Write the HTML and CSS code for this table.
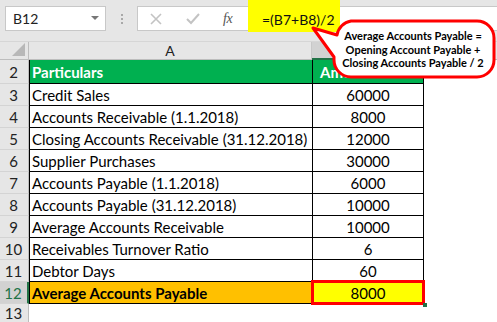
FILE: index.html
```html
<!DOCTYPE html>
<html>
<head>
<meta charset="utf-8">
<link rel="stylesheet" href="styles.css">
</head>
<body>
<div class="app">
  <div class="toolbar">
    <div class="namebox"><span class="nb-text">B12</span><span class="caret"></span></div>
    <div class="sep"><i></i><i></i><i></i></div>
    <div class="fbar">
      <div class="ficons">
        <svg class="ico-x" width="12" height="12" viewBox="0 0 12 12"><path d="M1 1 L11 11 M11 1 L1 11" stroke="#c3c3c3" stroke-width="1.6" fill="none"/></svg>
        <svg class="ico-check" width="14" height="12" viewBox="0 0 14 12"><path d="M1 6 L5 10 L13 1" stroke="#c3c3c3" stroke-width="2" fill="none"/></svg>
        <span class="fx">fx</span>
      </div>
      <div class="formula">=(B7+B8)/2</div>
      <div class="frest"></div>
    </div>
  </div>

  <div class="sheet">
    <div class="row hdr">
      <div class="rh corner"><span class="tri"></span></div>
      <div class="ch">A</div>
      <div class="ch chsel"></div>
      <div class="rest"></div>
    </div>
    <div class="row r2">
      <div class="rh">2</div>
      <div class="ca green bold">Particulars</div>
      <div class="cb green bold left">Amount</div>
      <div class="rest"></div>
    </div>
    <div class="row"><div class="rh">3</div><div class="ca">Credit Sales</div><div class="cb">60000</div><div class="rest"></div></div>
    <div class="row"><div class="rh">4</div><div class="ca">Accounts Receivable (1.1.2018)</div><div class="cb">8000</div><div class="rest"></div></div>
    <div class="row"><div class="rh">5</div><div class="ca">Closing Accounts Receivable (31.12.2018)</div><div class="cb">12000</div><div class="rest"></div></div>
    <div class="row"><div class="rh">6</div><div class="ca">Supplier Purchases</div><div class="cb">30000</div><div class="rest"></div></div>
    <div class="row"><div class="rh">7</div><div class="ca">Accounts Payable (1.1.2018)</div><div class="cb">6000</div><div class="rest"></div></div>
    <div class="row"><div class="rh">8</div><div class="ca">Accounts Payable (31.12.2018)</div><div class="cb">10000</div><div class="rest"></div></div>
    <div class="row"><div class="rh">9</div><div class="ca">Average Accounts Receivable</div><div class="cb">10000</div><div class="rest"></div></div>
    <div class="row"><div class="rh">10</div><div class="ca">Receivables Turnover Ratio</div><div class="cb">6</div><div class="rest"></div></div>
    <div class="row"><div class="rh">11</div><div class="ca">Debtor Days</div><div class="cb">60</div><div class="rest"></div></div>
    <div class="row"><div class="rh rhsel">12</div><div class="ca orange bold">Average Accounts Payable</div><div class="cb yellow selected">8000<span class="handle"></span></div><div class="rest"></div></div>
    <div class="row r13"><div class="rh">13</div><div class="blank"></div><div class="blank"></div><div class="rest"></div></div>
  </div>

  <svg class="callout" width="497" height="90" viewBox="0 0 497 90">
    <path d="M351 21 H477 A17 17 0 0 1 494 38 V60 A17 17 0 0 1 477 77 H351 A17 17 0 0 1 334 60 V57 L313 28 L337 35 A17 17 0 0 1 351 21 Z" fill="#ffffff" stroke="#ff0000" stroke-width="3" stroke-linejoin="round"/>
    <text class="ct" x="413" y="40">Average Accounts Payable =</text>
    <text class="ct" x="413" y="54">Opening Account Payable +</text>
    <text class="ct" x="413" y="67">Closing Accounts Payable / 2</text>
  </svg>
</div>
</body>
</html>
```

FILE: styles.css
```css
* { box-sizing: border-box; }
html, body { margin: 0; padding: 0; background: #ffffff; }
body {
  font-family: Lato, "Liberation Sans", sans-serif;
  width: 497px;
  height: 322px;
  overflow: hidden;
}
.app { position: relative; width: 497px; height: 322px; }

/* toolbar */
.toolbar {
  height: 42px;
  background: #e6e6e6;
  display: flex;
  align-items: flex-start;
  border-bottom: 1px solid #d6d6d6;
}
.namebox {
  margin-top: 6px;
  margin-left: 5px;
  width: 101px;
  height: 25px;
  background: #fff;
  border: 1px solid #c8c8c8;
  display: flex;
  align-items: center;
  justify-content: space-between;
  padding: 0 6px 0 7px;
}
.nb-text { font-size: 14px; color: #222; }
.caret {
  width: 0; height: 0;
  border-left: 4px solid transparent;
  border-right: 4px solid transparent;
  border-top: 4px solid #777;
  margin-top: -2px;
}
.sep {
  width: 31px;
  height: 25px;
  margin-top: 6px;
  display: flex;
  flex-direction: column;
  align-items: center;
  justify-content: center;
  gap: 2px;
}
.sep i { display: block; width: 2px; height: 2px; background: #a8a8a8; }
.fbar { display: flex; flex: 1; height: 32px; }
.ficons {
  margin-top: 6px;
  width: 111px;
  height: 25px;
  background: #fff;
  border: 1px solid #c8c8c8;
  border-right: none;
  display: flex;
  align-items: center;
  padding-left: 12px;
}
.ico-check { margin-left: 24px; }
.fx {
  margin-left: 23px;
  font-family: "Liberation Serif", serif;
  font-style: italic;
  font-size: 14px;
  color: #555;
  letter-spacing: -0.5px;
}
.formula {
  width: 92px;
  height: 32px;
  background: #ffff00;
  font-size: 14px;
  line-height: 18px;
  padding: 11px 0 0 14px;
  color: #111;
  white-space: nowrap;
}
.frest {
  flex: 1;
  margin-top: 6px;
  height: 25px;
  background: #fff;
  border-top: 1px solid #c8c8c8;
  border-bottom: 1px solid #c8c8c8;
}

/* sheet */
.sheet { display: flex; flex-direction: column; }
.row {
  display: grid;
  grid-template-columns: 29px 283px 112px 1fr;
  height: 22px;
}
.row.hdr { height: 18px; }
.row.r2 { height: 24px; }
.row.r13 { height: 18px; }

.rh {
  background: #e6e6e6;
  border-right: 1px solid #bdbdbd;
  border-bottom: 1px solid #d4d4d4;
  font-size: 15px;
  color: #222;
  display: flex;
  align-items: center;
  justify-content: center;
  padding-right: 1px;
}
.corner { position: relative; border-bottom: 1px solid #bdbdbd; }
.tri {
  position: absolute;
  right: 3px;
  bottom: 3px;
  width: 0; height: 0;
  border-left: 13px solid transparent;
  border-bottom: 13px solid #b8b8b8;
}
.ch {
  background: #e6e6e6;
  border-right: 1px solid #c8c8c8;
  border-bottom: 1px solid #bdbdbd;
  font-size: 14px;
  color: #222;
  display: flex;
  align-items: center;
  justify-content: center;
}
.chsel { background: #d2d2d2; border-bottom: 2px solid #217346; }
.hdr .rest { background: #e6e6e6; border-bottom: 1px solid #bdbdbd; }

.ca, .cb {
  font-size: 15px;
  color: #000;
  border-bottom: 1px solid #000;
  border-left: 1px solid #000;
  display: flex;
  align-items: center;
  white-space: nowrap;
  overflow: hidden;
}
.ca { padding-left: 2px; }
.cb { justify-content: center; border-right: 1px solid #000; }
.cb.left { justify-content: flex-start; padding-left: 7px; }
.bold { font-weight: 700; }
.green { background: #00b050; color: #fff; }
.orange { background: #ffc000; }
.yellow { background: #ffff00; }
.selected { position: relative; overflow: visible; }
.selected::after {
  content: "";
  position: absolute;
  left: -2px;
  top: -2px;
  right: -2px;
  bottom: -2px;
  border: 3px solid #ff0000;
}
.handle {
  position: absolute;
  right: -4px;
  bottom: -4px;
  width: 4px;
  height: 4px;
  background: #217346;
  z-index: 2;
}
.rhsel {
  background: #d2d2d2;
  color: #217346;
  border-right: 2px solid #217346;
}
.blank { background: #fff; }

/* callout */
.callout { position: absolute; left: 0; top: 0; }
.ct {
  font-family: Lato, "Liberation Sans", sans-serif;
  font-weight: 700;
  font-size: 11px;
  text-anchor: middle;
  fill: #000;
}
```
